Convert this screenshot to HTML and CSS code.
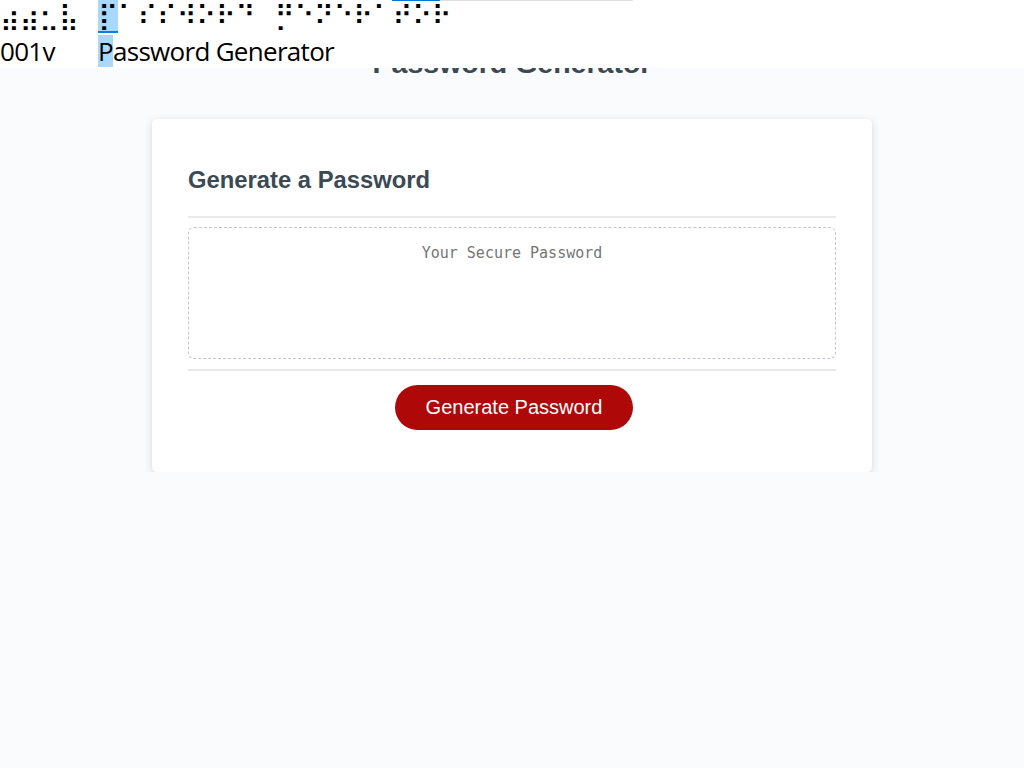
FILE: index.html
```html
<!DOCTYPE html>
<html lang="en">
<head>
<meta charset="utf-8">
<title>Password Generator</title>
<link rel="stylesheet" href="styles.css">
</head>
<body>
<main class="wrapper">
  <h1 class="title">Password Generator</h1>
  <section class="card">
    <header class="card-header">
      <h2>Generate a Password</h2>
    </header>
    <div class="card-body">
      <textarea readonly class="password" placeholder="Your Secure Password" aria-label="Generated Password"></textarea>
    </div>
    <footer class="card-footer">
      <button class="btn" type="button">Generate Password</button>
    </footer>
  </section>
</main>

<div class="braille-viewer" aria-hidden="true">
  <div class="bv-scroll"><span class="bv-thumb"></span></div>
  <div class="bv-braille"><span>⣴⣴⣂⣧⠀</span><span class="bv-cursor">⡏</span><span>⠁⠎⠎⠺⠕⠗⠙⠀⡛⠑⠝⠑⠗⠁⠞⠕⠗</span></div>
  <div class="bv-text"><span class="bv-col">001v</span><span class="bv-line"><span class="bv-mark">P</span>assword Generator</span></div>
</div>
</body>
</html>
```

FILE: styles.css
```css
* { box-sizing: border-box; }

html, body {
  margin: 0;
  padding: 0;
}

body {
  background: #f9fbfd;
  font-family: "Liberation Sans", Arial, sans-serif;
  color: #3b4954;
}

.wrapper {
  padding: 47px 20px 0;
}

.title {
  margin: 0 0 39px;
  font-size: 28.5px;
  line-height: 33px;
  font-weight: bold;
  text-align: center;
  color: #3b4954;
}

.card {
  max-width: 720px;
  margin: 0 auto;
  padding: 47px 36px 42px;
  background: #ffffff;
  border-radius: 5px;
  box-shadow: rgba(0, 0, 0, 0.15) 0 2px 8px 0;
}

.card-header {
  padding-bottom: 22px;
  border-bottom: 2px solid #e7e9eb;
}

.card-header h2 {
  margin: 0;
  font-size: 23.8px;
  line-height: 28px;
  font-weight: bold;
  color: #3b4954;
}

.card-body {
  padding: 9px 0 10px;
}

.password {
  display: block;
  width: 100%;
  height: 132px;
  margin: 0;
  padding: 16px 15px 0;
  border: 1px dashed #c0c7cf;
  border-radius: 6px;
  resize: none;
  overflow: hidden;
  font-family: "DejaVu Sans Mono", monospace;
  font-size: 15px;
  line-height: 18px;
  text-align: center;
  background: #ffffff;
  color: #333;
}

.password::placeholder {
  color: #757575;
  opacity: 1;
}

.card-footer {
  border-top: 2px solid #e7e9eb;
  padding-top: 14px;
  text-align: center;
}

.btn {
  display: inline-block;
  margin: 0 16px 0 20px;
  padding: 11px 30.5px;
  border: none;
  border-radius: 25px;
  background-color: #af0808;
  color: #ffffff;
  font-family: "Liberation Sans", Arial, sans-serif;
  font-size: 20px;
  line-height: 23px;
  cursor: pointer;
}

/* braille viewer overlay */
.braille-viewer {
  position: absolute;
  top: 0;
  left: 0;
  right: 0;
  height: 68px;
  background: #ffffff;
  color: #000000;
}

.bv-scroll {
  position: absolute;
  top: 0;
  left: 392px;
  width: 241px;
  height: 1px;
  background: #dddddd;
}

.bv-thumb {
  display: block;
  width: 48px;
  height: 1px;
  background: #0078d7;
}

.bv-braille {
  height: 33px;
  font-family: "DejaVu Sans", sans-serif;
  font-size: 26.8px;
  line-height: 31px;
  white-space: pre;
}

.bv-cursor {
  display: inline-block;
  background: #a8d8fc;
  border-bottom: 2px solid #0a7fde;
}

.bv-text {
  display: flex;
  height: 35px;
  padding-top: 2px;
  font-family: "Open Sans", "Noto Sans", sans-serif;
  font-size: 26px;
  line-height: 32px;
  letter-spacing: -0.7px;
  white-space: pre;
}

.bv-col {
  width: 98px;
}

.bv-mark {
  display: inline-block;
  background: #a8d8fc;
}
```
